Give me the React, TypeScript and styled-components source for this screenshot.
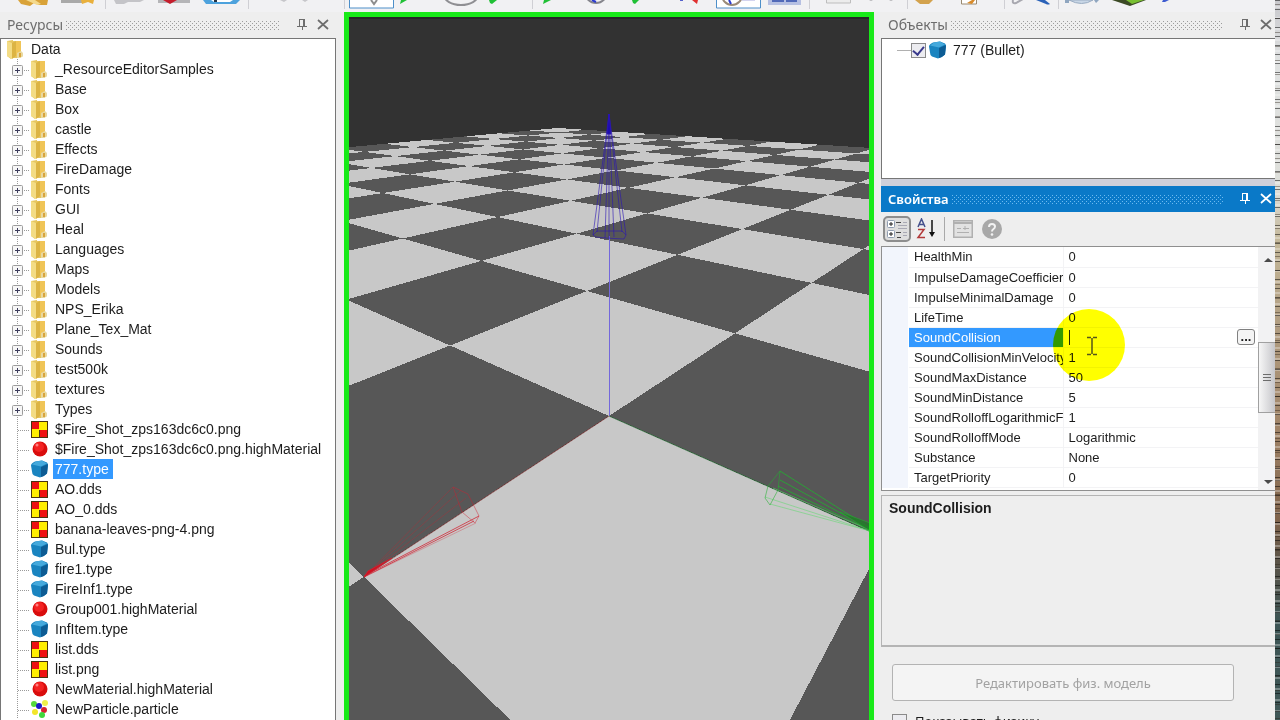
import React from 'react';
import styled, { createGlobalStyle } from 'styled-components';

const GlobalStyle = createGlobalStyle`
  * { box-sizing: border-box; }
  body {
    margin: 0;
    background: #eeeeee;
    color: #1c1c1c;
    font-family: "Liberation Sans", Arial, sans-serif;
    font-size: 14px;
  }
  button, input { font: inherit; color: inherit; }
`;

/* ---------- shell ---------- */

const Shell = styled.div`
  display: flex;
  height: 100vh;
  overflow: hidden;
`;

const Workspace = styled.div`
  display: flex;
  flex-direction: column;
  flex: 1;
  min-width: 0;
`;

const Columns = styled.div`
  display: flex;
  flex: 1;
  min-height: 0;
`;

const EdgeStrip = styled.div`
  width: 5px;
  background:
    repeating-linear-gradient(rgba(0, 0, 0, 0.5) 0 1px, transparent 1px 9px),
    repeating-linear-gradient(transparent 0 4px, rgba(40, 30, 20, 0.4) 4px 5px, transparent 5px 14px),
    repeating-linear-gradient(transparent 0 6px, rgba(255, 255, 255, 0.3) 6px 8px, transparent 8px 11px),
    linear-gradient(#c8c8cc 0, #e0e2e2 60px, #dedfda 190px, #c4b89a 240px, #b09c80 330px, #a08468 430px, #80644c 520px, #5c5448 560px, #3c5454 620px, #405858 100%);
`;

/* ---------- main toolbar ---------- */

const Toolbar = styled.div`
  display: flex;
  height: 12px;
  background: #f1f1f3;
  overflow: hidden;
`;

const ToolButton = styled.button<{ $w: number }>`
  flex: 0 0 ${(p) => p.$w}px;
  height: 12px;
  padding: 0;
  border: 0;
  background: none;
  svg { display: block; }
`;

const Separator = styled.span<{ $w: number }>`
  flex: 0 0 ${(p) => p.$w}px;
  height: 9px;
  background: linear-gradient(90deg, transparent calc(50% - 1px), #cfcfd4 calc(50% - 1px) 50%, transparent 50%);
`;

type Tool = { from: number; to: number; name?: string; art?: React.ReactNode };

const tools: Tool[] = [
  { from: 0, to: 55, name: 'Open', art: <><path d="M18 0h30l-1 5h-8l-5-2-4 3-9-2z" fill="#d9a238" /><path d="M26 0h9l6 4-4 1z" fill="#f4d98c" /></> },
  { from: 55, to: 101, name: 'New', art: <><path d="M61 0h22v3h-22z" fill="#a9a9a9" /><path d="M81 0h13l-1 4-5-2-6 2z" fill="#e9b03c" /></> },
  { from: 101, to: 111 },
  { from: 111, to: 150, name: 'Cut', art: <path d="M114 0h30l-4 2h-12l-4 2h-8z" fill="#c4c4c8" /> },
  { from: 150, to: 197, name: 'Delete', art: <><path d="M158 0h32v3h-32z" fill="#b5b5b8" /><path d="M163 0h14l-7 4z" fill="#c51d2c" /></> },
  { from: 197, to: 244, name: 'Save', art: <><path d="M203 0h37l-4 4h-30z" fill="#4da2dd" /><path d="M211 0h22l-3 2h-16z" fill="#fff" /><path d="M214 0h3v2h-3z" fill="#234" /></> },
  { from: 244, to: 254 },
  { from: 254, to: 290, name: 'Undo', art: <path d="M280 0l4 2 3-2z" fill="#c6c6ca" /> },
  { from: 290, to: 342, name: 'Redo', art: <path d="M302 0l3 2 3-2z" fill="#c6c6ca" /> },
  { from: 342, to: 348 },
  { from: 348, to: 394, name: 'Select', art: <><path d="M349.500-2v10h44v-10z" fill="#fff" stroke="#4d8fc9" /><path d="M371 0l3 4 3-4" fill="none" stroke="#8d8d8d" strokeWidth="2" /></> },
  { from: 394, to: 438, name: 'Move', art: <path d="M400 4l1-4h6z" fill="#20c035" /> },
  { from: 438, to: 482, name: 'Rotate', art: <ellipse cx="461" cy="-5" rx="17" ry="10" fill="none" stroke="#8f8f93" strokeWidth="2" /> },
  { from: 482, to: 528, name: 'Scale', art: <path d="M489 0h8l-5 4-2-1z" fill="#20c035" /> },
  { from: 528, to: 538 },
  { from: 538, to: 578, name: 'Local axes', art: <path d="M543 4l1-4h7z" fill="#20c035" /> },
  { from: 578, to: 622, name: 'World axes', art: <><circle cx="596" cy="-8" r="11" fill="none" stroke="#85858c" strokeWidth="2" /><path d="M592 0l4 2" stroke="#2a3ad0" strokeWidth="2" /></> },
  { from: 622, to: 664, name: 'Snap', art: <path d="M632 0h7l-4 4-2-1z" fill="#20c035" /> },
  { from: 664, to: 712, name: 'Pivot', art: <><path d="M680 0h3v1h-3z" fill="#5561cc" /><path d="M692 0h6l-1 4z" fill="#e03030" /></> },
  { from: 712, to: 764, name: 'Show axes', art: <><path d="M716.500-2v10h44v-10z" fill="#fff" stroke="#4d8fc9" /><circle cx="732" cy="-5" r="10" fill="none" stroke="#9a8a78" strokeWidth="2" /><path d="M729 0l2 4" stroke="#2a3ad0" strokeWidth="2" /><path d="M742 0h13" stroke="#a9a9e0" /></> },
  { from: 764, to: 806, name: 'Grid', art: <><path d="M768 0h33v5h-33z" fill="#b6c0e2" /><path d="M772 0h12v2h-12zM786 0h11v2h-11z" fill="#5169b8" /></> },
  { from: 806, to: 815 },
  { from: 815, to: 860, name: 'Window', art: <path d="M826.500-2v5h24v-5z" fill="#ececec" stroke="#bdbdbd" /> },
  { from: 860, to: 903, name: 'Options', art: <path d="M869 0h4l-2 1zM889 0h4l-2 1z" fill="#b0b0b4" /> },
  { from: 903, to: 912 },
  { from: 912, to: 945, name: 'Lock', art: <path d="M915 0h18l-4 4h-9z" fill="#d3a24d" /> },
  { from: 945, to: 1001, name: 'Edit', art: <><path d="M961.500-2v6h15v-6z" fill="#fff" stroke="#9b8a70" /><path d="M967 3l5-3h3l-3 4z" fill="#d88a2a" /></> },
  { from: 1001, to: 1010 },
  { from: 1010, to: 1034, name: 'Attach', art: <path d="M1013 0q-1 4 3 3l7-4" fill="none" stroke="#a8a8b0" strokeWidth="2" /> },
  { from: 1034, to: 1054, name: 'Draw', art: <path d="M1036 0h9l5 4q-2 1-4 0z" fill="#2a62b8" /> },
  { from: 1054, to: 1063 },
  { from: 1063, to: 1105, name: 'Globe', art: <><path d="M1065 0h4v3h-4zM1094 0h5l-3 3z" fill="#8fa6c0" /><path d="M1069 0h24q-11 7-24 0z" fill="#c8d6e6" stroke="#9aacc2" /></> },
  { from: 1105, to: 1150, name: 'Layers', art: <><path d="M1112 0h34l-16 6z" fill="#3b4a25" /><path d="M1126 0h18l-12 4z" fill="#79c032" /></> },
  { from: 1150, to: 1200, name: 'Help', art: <path d="M1162 2l1-2h6l-4 2z" fill="#3d5bd0" /> },
];

const MainToolbar = () => (
  <Toolbar>
    {tools.map((t) => {
      const w = t.to - t.from;
      return t.name ? (
        <ToolButton key={t.from} $w={w} aria-label={t.name}>
          <svg width={w} height="12" viewBox={`${t.from} 0 ${w} 12`}>{t.art}</svg>
        </ToolButton>
      ) : (
        <Separator key={t.from} $w={w} />
      );
    })}
  </Toolbar>
);

/* ---------- docked panel header ---------- */

const Header = styled.header<{ $active?: boolean }>`
  display: flex;
  align-items: center;
  height: 26px;
  flex: none;
  padding: 0 0 0 7px;
  gap: 3px;
  font-family: "Noto Sans", "Open Sans", sans-serif;
  font-size: 14px;
  line-height: 20px;
  color: ${(p) => (p.$active ? '#ffffff' : '#6d6d6d')};
  background: ${(p) => (p.$active ? '#0a79c8' : 'transparent')};
  h2 {
    margin: 0;
    font-size: ${(p) => (p.$active ? '13px' : '14px')};
    font-weight: ${(p) => (p.$active ? 600 : 400)};
  }
`;

const gripDot = (color: string) => `conic-gradient(from 270deg at 1px 1px, ${color} 90deg, transparent 0)`;

const Grip = styled.span<{ $active?: boolean }>`
  flex: 1;
  height: 10px;
  margin-right: 10px;
  background-image:
    ${(p) => gripDot(p.$active ? '#6cbaf0' : '#9c9c9c')},
    ${(p) => gripDot(p.$active ? '#6cbaf0' : '#9c9c9c')};
  background-position: 0 1px, 2px 3px;
  background-size: 4px 4px;
`;

const HeaderButton = styled.button`
  width: 18px;
  height: 18px;
  padding: 0;
  border: 0;
  background: none;
  svg { display: block; }
`;

const PanelHeader = ({ title, active }: { title: string; active?: boolean }) => (
  <Header $active={active}>
    <h2>{title}</h2>
    <Grip $active={active} />
    <HeaderButton aria-label="Pin">
      <svg width="18" height="18" fill="none" stroke="currentColor">
        <path d="M6.500 3v7M6 3.500h6M4 10.500h10M9.500 11v3" />
        <path d="M11 3v7" strokeWidth="2" />
      </svg>
    </HeaderButton>
    <HeaderButton aria-label="Close">
      <svg width="18" height="18" fill="none" stroke="currentColor" strokeWidth="1.700">
        <path d="M4 4l10 9M14 4L4 13" />
      </svg>
    </HeaderButton>
  </Header>
);

/* ---------- resource tree ---------- */

const Resources = styled.section`
  display: flex;
  flex-direction: column;
  width: 336px;
  flex: none;
  ${Header} { padding-right: 4px; }
`;

const Tree = styled.ul`
  flex: 1;
  min-height: 0;
  margin: 0;
  padding: 0;
  overflow: hidden;
  list-style: none;
  background: #ffffff;
  border: 1px solid #767676;
  border-bottom: 0;
`;

const TreeItem = styled.li<{ $root?: boolean }>`
  display: flex;
  align-items: center;
  height: 20px;
  padding-left: ${(p) => (p.$root ? '5px' : '11px')};
  white-space: nowrap;
  svg { flex: none; }
`;

const Label = styled.span<{ $selected?: boolean }>`
  height: 20px;
  line-height: 20px;
  margin-left: 5px;
  padding: 0 4px 0 2px;
  color: ${(p) => (p.$selected ? '#ffffff' : 'inherit')};
  background: ${(p) => (p.$selected ? '#3399ff' : 'transparent')};
`;

type Kind = 'folder' | 'texture' | 'material' | 'type' | 'particle';

const Icon = ({ kind }: { kind: Kind }) => (
  <svg width="18" height="20">
    {kind === 'folder' && (
      <>
        <path d="M1 2l6-1v1h8v12h2v3l-3 2h-8l-1 1-4-3z" fill="#e6c660" />
        <path d="M1 2l5 2v16l-5-3z" fill="#f3dc85" />
        <path d="M6 4l4-2v15l-4 3z" fill="#dcb444" />
        <path d="M10 2h5v12l-5 3z" fill="#f0c557" />
        <path d="M11 14l4-2 2 2v3l-3 2h-3z" fill="#e9d9a0" />
        <path d="M13 14h2v4h-2z" fill="#d8a43c" />
      </>
    )}
    {kind === 'texture' && (
      <>
        <path d="M1 2h17v17H1z" fill="#4a3410" />
        <path d="M2 3h7v7H2zM10 11h7v7h-7z" fill="#ee1111" />
        <path d="M9 3h8v8h-8zM2 10h7v8H2z" fill="#ffee00" />
      </>
    )}
    {kind === 'material' && (
      <>
        <circle cx="10" cy="10" r="7.500" fill="#d90d0d" />
        <circle cx="9" cy="8" r="5" fill="#f32222" />
        <circle cx="7" cy="6" r="1.500" fill="#ff8080" />
      </>
    )}
    {kind === 'type' && (
      <>
        <path d="M5 2.500l7-1 5 2q1 1 1 3l-1 8q-3 3-7 4l-6-2q-2-1-2-4l-1-6q0-2 4-4z" fill="#1a84c0" />
        <path d="M6 2.500l6-1 5 3-6 3-9-2z" fill="#45a9dc" />
        <path d="M11 8l7-3-1 9.500q-3 3-6 3.500z" fill="#0d5c94" />
      </>
    )}
    {kind === 'particle' && (
      <>
        <circle cx="4" cy="5" r="3" fill="#55d83c" />
        <circle cx="15" cy="4" r="3" fill="#eef04a" />
        <circle cx="5" cy="13" r="3" fill="#f2e52a" />
        <circle cx="14" cy="11" r="3" fill="#d81f30" />
        <circle cx="12" cy="16" r="3" fill="#3fd63c" />
        <circle cx="9" cy="7" r="3" fill="#1a18c8" />
      </>
    )}
  </svg>
);

const Branch = ({ expandable }: { expandable?: boolean }) => (
  <svg width="18" height="20" stroke="#9a9a9a" fill="none">
    <path d="M5.500 0v20M6 11.500h12" strokeDasharray="1 1" />
    {expandable && (
      <>
        <rect x="0.500" y="6.500" width="10" height="10" rx="1" fill="#f7f7f7" stroke="#9c9c9c" />
        <path d="M3 11.500h5M5.500 9v5" stroke="#3c3c5c" />
      </>
    )}
  </svg>
);

const entries: [string, Kind][] = [
  ...['_ResourceEditorSamples', 'Base', 'Box', 'castle', 'Effects', 'FireDamage', 'Fonts', 'GUI', 'Heal',
    'Languages', 'Maps', 'Models', 'NPS_Erika', 'Plane_Tex_Mat', 'Sounds', 'test500k', 'textures', 'Types',
  ].map((n): [string, Kind] => [n, 'folder']),
  ['$Fire_Shot_zps163dc6c0.png', 'texture'],
  ['$Fire_Shot_zps163dc6c0.png.highMaterial', 'material'],
  ['777.type', 'type'],
  ['AO.dds', 'texture'],
  ['AO_0.dds', 'texture'],
  ['banana-leaves-png-4.png', 'texture'],
  ['Bul.type', 'type'],
  ['fire1.type', 'type'],
  ['FireInf1.type', 'type'],
  ['Group001.highMaterial', 'material'],
  ['InfItem.type', 'type'],
  ['list.dds', 'texture'],
  ['list.png', 'texture'],
  ['NewMaterial.highMaterial', 'material'],
  ['NewParticle.particle', 'particle'],
];

/* ---------- 3D viewport ---------- */

const Viewport = styled.main`
  flex: 1;
  min-width: 0;
  margin: 0 0 0 8px;
  border: 5px solid #18ea18;
  border-bottom: 0;
  background: #323232;
  svg { display: block; width: 100%; height: 100%; }
`;

/* Projects a ground-plane point; u runs away along X, v away along Y. */
const depth = (u: number, v: number) => 1 + 0.321 * u + 0.269 * v;
const project = (u: number, v: number): [number, number] => {
  const w = depth(u, v);
  return [(609 + 361.9 * u - 37.95 * v) / w, (416 + 24.3 * u + 22.4 * v) / w];
};

const tiles = (light: boolean) => {
  let d = '';
  for (let i = -3; i < 10; i++) {
    for (let j = -3; j < 10; j++) {
      if (((i + j) % 2 === 0) !== light || depth(i, j) < 0.03) continue;
      const c = [project(i, j), project(i + 1, j), project(i + 1, j + 1), project(i, j + 1)];
      d += 'M' + c.map(([x, y]) => `${x.toFixed(1)} ${y.toFixed(1)}`).join('L') + 'Z';
    }
  }
  return d;
};

const Scene = () => (
  <Viewport>
    <svg viewBox="349 17 520 703" preserveAspectRatio="xMidYMid slice">
      <path d="M349 17h520v2H349z" fill="#262626" />
      <g shapeRendering="crispEdges">
        <path d={tiles(true)} fill="#c8c8c8" />
        <path d={tiles(false)} fill="#575757" />
      </g>
      <path d="M609 236h1v180h-1z" fill="#7468dc" />
      <g fill="none" stroke="#2a14b4" strokeOpacity="0.6">
        <path d="M609 114L593 235M609 114L597 232M609 114L605 238M609 114L609 238M609 114L614 237M609 114L622 232M609 114L626 235" />
        <path d="M593 235L597 231L622 231L626 235L624 239L605 238L596 237Z" />
        <path d="M607 134L609 114L611 134Z" fill="#1c0cb0" strokeOpacity="0.9" />
      </g>
      <g fill="none" stroke="#d02030" strokeOpacity="0.45">
        <path d="M609 416L364 577" stroke="#7c3030" strokeOpacity="0.7" />
        <path d="M364 577L453 487M364 577L460 491M364 577L466 498M364 577L476 523" strokeOpacity="0.3" />
        <path d="M364 576L479 516M364 577L474 521" strokeOpacity="0.75" />
        <path d="M453 487L468 494L479 516L475 523L462 512Z" />
        <path d="M364 577L368 571L392 558Z" fill="#d01020" strokeOpacity="0.8" />
      </g>
      <g fill="none" stroke="#22b030" strokeOpacity="0.55">
        <path d="M609 416L869 531" stroke="#2c6a38" strokeOpacity="0.8" />
        <path d="M870 528L780 471M870 529L780 480M870 530L778 486" strokeOpacity="0.8" />
        <path d="M870 530L773 488M870 531L765 497M870 531L770 504" stroke="#60d870" />
        <path d="M780 471L768 486L765 498L770 505L778 490Z" />
        <path d="M870 523L840 512L870 531Z" fill="#1c7a24" fillOpacity="0.7" />
      </g>
    </svg>
  </Viewport>
);

/* ---------- right column ---------- */

const SidePanel = styled.aside`
  display: flex;
  flex-direction: column;
  width: 394px;
  flex: none;
  margin-left: 7px;
`;

const Objects = styled.div`
  display: flex;
  align-items: flex-start;
  height: 141px;
  flex: none;
  padding: 1px 0 0 15px;
  background: #ffffff;
  border: 1px solid #767676;
  border-right: 0;
`;

const ObjectRow = styled.label`
  display: flex;
  align-items: center;
  height: 20px;
  font-size: 14px;
  svg { margin-left: 2px; }
  &::before {
    content: "";
    width: 14px;
    border-top: 1px solid #b0b0b0;
  }
`;

const CheckBox = styled.input`
  appearance: none;
  display: grid;
  place-items: center;
  flex: none;
  width: 15px;
  height: 15px;
  margin: 0;
  border: 1px solid #8a8a8a;
  background: #ececf0;
  &:checked::before {
    content: "";
    width: 5px;
    height: 9px;
    margin-bottom: 3px;
    border: solid #3a3a8c;
    border-width: 0 2px 2px 0;
    transform: rotate(40deg);
  }
`;

const Splitter = styled.div`
  height: 7px;
  flex: none;
  background: #cfd0da;
`;

const PropertyTools = styled.div`
  display: flex;
  align-items: center;
  height: 34px;
  flex: none;
  gap: 1px;
  padding-left: 2px;
`;

const PropertyTool = styled.button<{ $pressed?: boolean }>`
  display: grid;
  place-items: center;
  width: 28px;
  height: 26px;
  padding: 0;
  border: ${(p) => (p.$pressed ? '2px solid #8d8d8d' : '0')};
  border-radius: 5px;
  background: ${(p) => (p.$pressed ? '#dedede' : 'none')};
`;

const ToolDivider = styled.span`
  width: 1px;
  height: 24px;
  margin: 0 3px;
  background: #a9a9a9;
`;

const GridFrame = styled.div`
  display: flex;
  height: 245px;
  flex: none;
  background: #ffffff;
  border: 1px solid #8f8f8f;
  border-right: 0;
`;

const Properties = styled.table`
  flex: 1;
  table-layout: fixed;
  border-collapse: collapse;
  align-self: flex-start;
  width: 100%;
  font-size: 13px;
  background: linear-gradient(90deg, #f2f5fc 26px, #ffffff 26px);
`;

const PropertyRow = styled.tr<{ $selected?: boolean }>`
  height: 20px;
  th, td {
    height: 20px;
    padding: 0 0 0 5px;
    border-bottom: 1px solid #f3f3f5;
    font-weight: 400;
    line-height: 19px;
    text-align: left;
    white-space: nowrap;
    overflow: hidden;
  }
  th {
    color: ${(p) => (p.$selected ? '#ffffff' : 'inherit')};
    background: ${(p) => (p.$selected ? '#3399ff' : 'none')};
  }
  td:first-child { border: 0; }
  td:last-child { border-left: 1px solid #f3f3f5; overflow: visible; }
`;

const ValueEditor = styled.div`
  position: relative;
  display: flex;
  align-items: center;
  height: 19px;
  padding-right: 3px;
`;

const ValueInput = styled.input`
  flex: 1;
  min-width: 0;
  height: 15px;
  padding: 0;
  border: 0;
  border-left: 1px solid #222222;
  background: none;
  outline: 0;
`;

const BrowseButton = styled.button`
  width: 18px;
  height: 16px;
  padding: 0;
  border: 1px solid #808080;
  border-radius: 3px;
  background: #f4f4f4;
  line-height: 8px;
  font-weight: 700;
`;

const Spotlight = styled.span`
  position: absolute;
  left: -16px;
  top: -19px;
  width: 72px;
  height: 72px;
  border-radius: 50%;
  background: #ffff00;
  mix-blend-mode: multiply;
  pointer-events: none;
`;

const TextCursor = styled.svg`
  position: absolute;
  left: 17px;
  top: 7px;
  pointer-events: none;
`;

const ScrollBar = styled.div`
  display: flex;
  flex-direction: column;
  width: 17px;
  flex: none;
  background: #f2f2f3;
`;

const ScrollArrow = styled.button`
  height: 20px;
  padding: 0 0 0 3px;
  border: 0;
  background: none;
`;

const ScrollThumb = styled.div`
  display: grid;
  place-items: center;
  height: 71px;
  margin: 75px 0 auto;
  border: 1px solid #a0a0a0;
  border-right: 0;
  background: linear-gradient(90deg, #f6f6f6, #c6c6ca);
`;

const Description = styled.div`
  height: 152px;
  flex: none;
  margin-top: 4px;
  padding: 3px 7px;
  border: 1px solid #b4b4b4;
  border-right: 0;
  border-bottom-width: 2px;
  font-size: 14px;
  font-weight: 700;
  line-height: 18px;
`;

const Footer = styled.div`
  display: flex;
  flex-direction: column;
  gap: 13px;
  padding: 17px 41px 0 11px;
  font-family: "Noto Sans", "Open Sans", sans-serif;
  font-size: 13px;
`;

const EditModel = styled.button`
  height: 37px;
  padding: 0;
  border: 1px solid #b3b3b3;
  border-radius: 3px;
  background: #f4f4f4;
  color: #a2a2a2;
`;

const PhysicsOption = styled.label`
  display: flex;
  align-items: flex-start;
  gap: 8px;
  line-height: 14px;
`;

const rows: [string, string][] = [
  ['HealthMin', '0'],
  ['ImpulseDamageCoefficier', '0'],
  ['ImpulseMinimalDamage', '0'],
  ['LifeTime', '0'],
  ['SoundCollision', ''],
  ['SoundCollisionMinVelocity', '1'],
  ['SoundMaxDistance', '50'],
  ['SoundMinDistance', '5'],
  ['SoundRolloffLogarithmicF', '1'],
  ['SoundRolloffMode', 'Logarithmic'],
  ['Substance', 'None'],
  ['TargetPriority', '0'],
];

const PropertyGrid = () => (
  <GridFrame>
    <Properties>
      <colgroup>
        <col style={{ width: 27 }} />
        <col style={{ width: 154 }} />
        <col />
      </colgroup>
      <tbody>
        {rows.map(([name, value]) => (
          <PropertyRow key={name} $selected={name === 'SoundCollision'}>
            <td />
            <th scope="row">{name}</th>
            <td>
              {name === 'SoundCollision' ? (
                <ValueEditor>
                  <ValueInput aria-label={name} defaultValue={value} />
                  <BrowseButton>...</BrowseButton>
                  <Spotlight />
                  <TextCursor width="12" height="22" fill="none" stroke="#55551a">
                    <path d="M1 2.500h4M7 2.500h4M6 3v16M1 19.500h4M7 19.500h4" strokeWidth="1.500" />
                  </TextCursor>
                </ValueEditor>
              ) : (
                value
              )}
            </td>
          </PropertyRow>
        ))}
      </tbody>
    </Properties>
    <ScrollBar>
      <ScrollArrow aria-label="Scroll up">
        <svg width="9" height="5"><path d="M0 5l4-4 5 4z" fill="#4a4a4a" /></svg>
      </ScrollArrow>
      <ScrollThumb>
        <svg width="8" height="10" stroke="#6c6c6c"><path d="M0 1.500h8M0 4.500h8M0 7.500h8" /></svg>
      </ScrollThumb>
      <ScrollArrow aria-label="Scroll down">
        <svg width="9" height="5"><path d="M0 0h9l-5 4z" fill="#4a4a4a" /></svg>
      </ScrollArrow>
    </ScrollBar>
  </GridFrame>
);

export default function App() {
  return (
    <Shell>
      <GlobalStyle />
      <Workspace>
        <MainToolbar />
        <Columns>
          <Resources>
            <PanelHeader title="Ресурсы" />
            <Tree>
              <TreeItem $root>
                <Icon kind="folder" />
                <Label>Data</Label>
              </TreeItem>
              {entries.map(([name, kind]) => (
                <TreeItem key={name}>
                  <Branch expandable={kind === 'folder'} />
                  <Icon kind={kind} />
                  <Label $selected={name === '777.type'}>{name}</Label>
                </TreeItem>
              ))}
            </Tree>
          </Resources>
          <Scene />
          <SidePanel>
            <PanelHeader title="Объекты" />
            <Objects>
              <ObjectRow>
                <CheckBox type="checkbox" defaultChecked />
                <Icon kind="type" />
                <Label>777 (Bullet)</Label>
              </ObjectRow>
            </Objects>
            <Splitter />
            <PanelHeader title="Свойства" active />
            <PropertyTools>
              <PropertyTool $pressed aria-label="Categorized">
                <svg width="24" height="20" fill="none">
                  <rect x="2.500" y="1.500" width="7" height="7" rx="1" fill="#fff" stroke="#8f9cb0" />
                  <rect x="2.500" y="11.500" width="7" height="7" rx="1" fill="#fff" stroke="#8f9cb0" />
                  <path d="M4 5h4M6 3v4M4 15h4M6 13v4" stroke="#222" />
                  <path d="M11 3.500h5M11 13.500h5M12 18.500h4" stroke="#444" />
                  <path d="M13 6.500h9M18 3.500h4M13 9.500h9M18 13.500h4M18 16.500h4" stroke="#a9a9b4" />
                </svg>
              </PropertyTool>
              <PropertyTool aria-label="Alphabetical">
                <svg width="20" height="22" fill="none">
                  <path d="M2 9L5.500 1L9 9M3 6.500h5" stroke="#44508c" strokeWidth="1.500" />
                  <path d="M2 11.500h6L2 19.500h7" stroke="#b23a3a" strokeWidth="1.500" />
                  <path d="M16 2v15" stroke="#111" strokeWidth="1.500" />
                  <path d="M13 14h6l-3 5z" fill="#111" />
                </svg>
              </PropertyTool>
              <ToolDivider />
              <PropertyTool disabled aria-label="Property pages">
                <svg width="20" height="18" fill="none" stroke="#b0b0b0">
                  <rect x="0.500" y="0.500" width="19" height="17" fill="#e2e2e2" strokeWidth="2" />
                  <path d="M1 3h18" strokeWidth="2" />
                  <path d="M4 8.500h4M10 8.500h6M4 12.500h12M12 6v4" />
                </svg>
              </PropertyTool>
              <PropertyTool disabled aria-label="Help">
                <svg width="20" height="20" fill="none">
                  <circle cx="10" cy="10" r="10" fill="#a8a8a8" />
                  <path d="M7 8q0-3 3-3t3 2.500q0 1.500-1.500 2.500T10 12.500" stroke="#f2f2f2" strokeWidth="2" />
                  <circle cx="10" cy="15.500" r="1.300" fill="#f2f2f2" />
                </svg>
              </PropertyTool>
            </PropertyTools>
            <PropertyGrid />
            <Description>SoundCollision</Description>
            <Footer>
              <EditModel disabled>Редактировать физ. модель</EditModel>
              <PhysicsOption>
                <CheckBox type="checkbox" />
                Показывать физику
              </PhysicsOption>
            </Footer>
          </SidePanel>
        </Columns>
      </Workspace>
      <EdgeStrip />
    </Shell>
  );
}
